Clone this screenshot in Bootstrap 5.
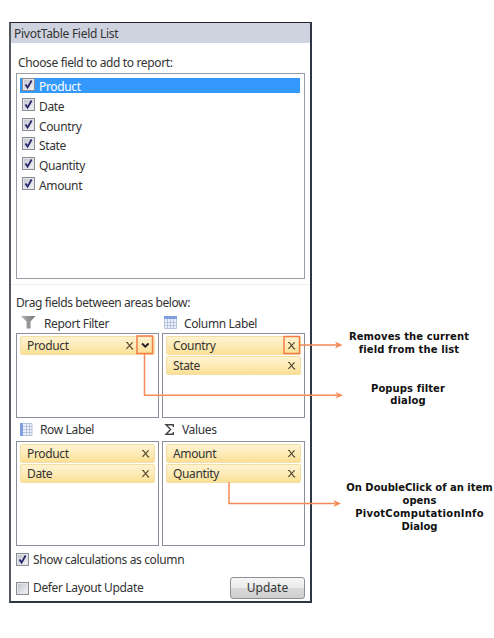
<!DOCTYPE html>
<html lang="en">
<head>
<meta charset="utf-8">
<meta name="viewport" content="width=device-width, initial-scale=1">
<title>PivotTable Field List</title>
<link href="https://cdn.jsdelivr.net/npm/bootstrap@5.3.0/dist/css/bootstrap.min.css" rel="stylesheet">
<style>
body{width:494px;height:638px;overflow:hidden;background:#fff;color:#333;font:12px/16px "Noto Sans","Open Sans",sans-serif;letter-spacing:-.36px}
.panel{width:303px;height:581px;margin:22px 0 0 9px;border:2px solid #2f3646;border-left-color:#55585f;border-top:1px solid #20232b;flex:none}
.panel-title{height:20px;background:#cfd3df;padding-left:3px;line-height:22px;letter-spacing:-.27px}
.choose{height:30px;padding:12px 0 0 7px;line-height:16px}
.fields{width:289px;height:206px;margin-left:5px;border:1px solid #9a9da6;padding:4px 4px 0 3px}
.field{height:19.8px;padding-left:2px}
.field .lbl{padding:1px 0 0 4px;height:19px;line-height:15px}
.field.active-row{color:#fff}
.active-bg{background:linear-gradient(#3399ff,#3399ff) 0 0/100% 15px no-repeat}
.chk{width:13px;height:13px;border:1px solid #8b8d93;background:linear-gradient(135deg,#c0c3ca,#f4f5f8);box-shadow:inset 0 0 0 1px #e4e6ec;flex:none}
.chk svg{display:block;width:11px;height:11px}
.lower{border-top:1px solid #f1f1f3;margin-top:5px;padding:0 5px}
.drag{height:27px;padding-top:9px;line-height:17px;letter-spacing:-.4px}
.area-head{height:21px;line-height:23px}
.area-head.second{height:23px;line-height:24px}
.zone{width:143px}
.drop{border:1px solid #8d8f9c;padding:2px 3px 0 3px}
.h1z{height:85px}.h2z{height:105px}
.pill{height:19px;margin-bottom:1.2px;border:1px solid #f3dfa6;border-radius:2px;background:linear-gradient(#fff3d0,#fdebb8 50%,#fbdf94);padding-left:6px}
.pill .lbl{line-height:18px}
.pill svg{width:9px;height:9px;margin:0 4.5px 1px 0}
.pill svg.x-wide{margin-right:20px}
.calc{height:13px;margin-top:7px;line-height:13px}
.defer{height:22px;margin-top:11px}
.update{width:75px;height:22px;border:1px solid #8e9096;border-radius:3px;background:linear-gradient(#f5f5f5,#ebebeb 48%,#d9d9d9 52%,#cfcfcf);color:#333;font-size:12px;line-height:20px;padding:0}
.notes{width:150px;margin-left:32px;color:#111;font:bold 10px/12.8px "DejaVu Sans",sans-serif;letter-spacing:.1px;text-align:center}
.note{white-space:nowrap}
.n1{margin:331px 16px 0 0;width:130px}.n2{margin:26px 0 0 0;width:128px}.n3{margin:74px 0 0 0;width:151px;letter-spacing:0}
.wide{letter-spacing:.25px}
.connectors{position:absolute;left:0;top:0;width:494px;height:638px;pointer-events:none}
</style>
</head>
<body class="d-flex align-items-start">
<svg width="0" height="0" class="position-absolute"><defs>
<symbol id="tick" viewBox="0 0 11 11"><path d="M2.500 5.400 4.600 8.600 8.600 1.500" fill="none" stroke="#29266b" stroke-width="1.800"/></symbol>
<symbol id="cross" viewBox="0 0 9 9"><path d="M1 1.500 2.200 1.500 7.200 7.800H8.200M7.600 1.300 1.400 7.900" fill="none" stroke="#54492f" stroke-width="1.200"/></symbol>
</defs></svg>
<main class="panel">
  <div class="panel-title">PivotTable Field List</div>
  <div class="choose">Choose field to add to report:</div>
  <div class="fields">
    <div class="field d-flex active-row active-bg"><div class="chk"><svg><use href="#tick"/></svg></div><div class="lbl">Product</div></div>
    <div class="field d-flex"><div class="chk"><svg><use href="#tick"/></svg></div><div class="lbl">Date</div></div>
    <div class="field d-flex"><div class="chk"><svg><use href="#tick"/></svg></div><div class="lbl">Country</div></div>
    <div class="field d-flex"><div class="chk"><svg><use href="#tick"/></svg></div><div class="lbl">State</div></div>
    <div class="field d-flex"><div class="chk"><svg><use href="#tick"/></svg></div><div class="lbl">Quantity</div></div>
    <div class="field d-flex"><div class="chk"><svg><use href="#tick"/></svg></div><div class="lbl">Amount</div></div>
  </div>
  <div class="lower">
    <div class="drag">Drag fields between areas below:</div>
    <div class="d-flex justify-content-between">
      <section class="zone">
        <div class="area-head d-flex">
          <svg width="28" height="20" viewBox="0 0 28 20"><defs><linearGradient id="fg"><stop offset="0" stop-color="#b5b5b5"/><stop offset="1" stop-color="#777"/></linearGradient></defs><path d="M5 4H19.500L14.500 9.500V16.500H10.500V9.500Z" fill="url(#fg)"/></svg>
          <span>Report Filter</span></div>
        <div class="drop h1z"><div class="pill d-flex align-items-center"><span class="lbl me-auto">Product</span><svg class="x-wide"><use href="#cross"/></svg></div></div>
      </section>
      <section class="zone">
        <div class="area-head d-flex">
          <svg width="22" height="20" viewBox="0 0 22 20"><path d="M2.500 4.500H14.500V16.500H2.500Z" fill="#eef3fb"/><path d="M2 4H15V7H2Z" fill="#7d9fe0"/><path d="M2.500 7V16.500H14.500V7M5.500 7V16M8.500 7V16M11.500 7V16M2 10.500H15M2 13.500H15" fill="none" stroke="#b7c4dc"/></svg>
          <span>Column Label</span></div>
        <div class="drop h1z"><div class="pill d-flex align-items-center"><span class="lbl me-auto">Country</span><svg><use href="#cross"/></svg></div><div class="pill d-flex align-items-center"><span class="lbl me-auto">State</span><svg><use href="#cross"/></svg></div></div>
      </section>
    </div>
    <div class="d-flex justify-content-between">
      <section class="zone">
        <div class="area-head second d-flex">
          <svg width="24" height="20" viewBox="0 0 24 20"><path d="M4.500 5.500H16V17.500H4.500Z" fill="#eef3fb"/><path d="M4 5H7V18H4Z" fill="#7d9fe0"/><path d="M7 5.500H16V17.500H7M10.500 6V17M13.500 6V17M7 8.500H16M7 11.500H16M7 14.500H16" fill="none" stroke="#b7c4dc"/></svg>
          <span>Row Label</span></div>
        <div class="drop h2z"><div class="pill d-flex align-items-center"><span class="lbl me-auto">Product</span><svg><use href="#cross"/></svg></div><div class="pill d-flex align-items-center"><span class="lbl me-auto">Date</span><svg><use href="#cross"/></svg></div></div>
      </section>
      <section class="zone">
        <div class="area-head second d-flex">
          <svg width="20" height="20" viewBox="0 0 20 20"><path d="M11.300 9V6.700H4L8.600 11.500L4 16.300H11.300V14" fill="none" stroke="#444" stroke-width="1.400"/></svg>
          <span>Values</span></div>
        <div class="drop h2z"><div class="pill d-flex align-items-center"><span class="lbl me-auto">Amount</span><svg><use href="#cross"/></svg></div><div class="pill d-flex align-items-center"><span class="lbl me-auto">Quantity</span><svg><use href="#cross"/></svg></div></div>
      </section>
    </div>
    <div class="calc d-flex align-items-center"><div class="chk"><svg><use href="#tick"/></svg></div><span class="ms-1">Show calculations as column</span></div>
    <div class="defer d-flex align-items-center"><div class="chk"></div><span class="ms-1">Defer Layout Update</span><button type="button" class="btn update ms-auto">Update</button></div>
  </div>
</main>
<aside class="notes">
  <div class="note n1">Removes the current<br>field from the list</div>
  <div class="note n2">Popups filter<br>dialog</div>
  <div class="note n3">On DoubleClick of an item<br>opens<br><span class="wide">PivotComputationInfo</span><br>Dialog</div>
</aside>
<svg class="connectors" viewBox="0 0 494 638" fill="none" stroke="#f58a56" stroke-width="1.500">
  <path d="M137 336H152.500V353.500H137ZM284 336.500H299.500V353.500H284Z" stroke="#f47b45"/>
  <path d="M300 345H337M144.500 354V395.300H337M229 482V503.500H335"/>
  <path d="M335 341.500 342.500 345 335 348.500 337 345ZM335.500 392 343 395.300 335.500 398.600 337.500 395.300ZM333.500 500 341 503.500 333.500 507 335.500 503.500Z" fill="#f58a56" stroke="none"/>
  <path d="M142 343.500 145.300 346.700 148.600 343.500" stroke="#222" stroke-width="2"/>
</svg>
<script src="https://cdn.jsdelivr.net/npm/bootstrap@5.3.0/dist/js/bootstrap.bundle.min.js"></script>
</body>
</html>
